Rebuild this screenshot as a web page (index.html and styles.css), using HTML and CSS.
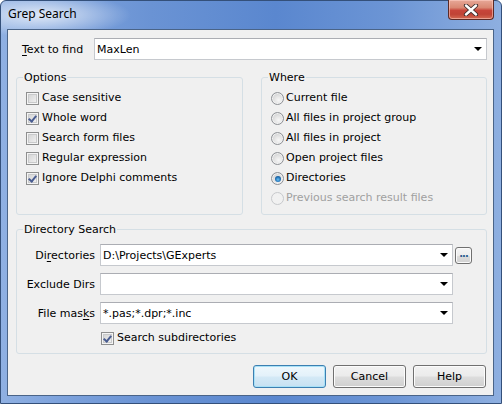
FILE: index.html
```html
<!DOCTYPE html>
<html>
<head>
<meta charset="utf-8">
<link rel="stylesheet" href="styles.css">
</head>
<body>
<div class="window">
  <div class="titlebar">
    <span class="title">Grep Search</span>
    <div class="close">
      <svg width="16" height="12" viewBox="0 0 16 12"><path d="M3 1.5 L13 10.5 M13 1.5 L3 10.5" stroke="#3a2a2a" stroke-width="4.2" stroke-linecap="round"/><path d="M3 1.5 L13 10.5 M13 1.5 L3 10.5" stroke="#ffffff" stroke-width="2.4" stroke-linecap="round"/></svg>
    </div>
  </div>
  <div class="client">
    <div class="find-row">
      <label class="find-label"><u>T</u>ext to find</label>
      <div class="combo find-combo"><span class="combo-text">MaxLen</span><span class="arrow"></span></div>
    </div>

    <div class="groups">
      <fieldset class="group options">
        <legend>Options</legend>
        <div class="opt"><span class="cb"></span><span class="lbl">Case sensitive</span></div>
        <div class="opt"><span class="cb checked"></span><span class="lbl">Whole word</span></div>
        <div class="opt"><span class="cb"></span><span class="lbl">Search form files</span></div>
        <div class="opt"><span class="cb"></span><span class="lbl">Regular expression</span></div>
        <div class="opt"><span class="cb checked"></span><span class="lbl">Ignore Delphi comments</span></div>
      </fieldset>
      <fieldset class="group where">
        <legend>Where</legend>
        <div class="opt"><span class="rb"></span><span class="lbl rl">Current file</span></div>
        <div class="opt"><span class="rb"></span><span class="lbl rl">All files in project group</span></div>
        <div class="opt"><span class="rb"></span><span class="lbl rl">All files in project</span></div>
        <div class="opt"><span class="rb"></span><span class="lbl rl">Open project files</span></div>
        <div class="opt"><span class="rb selected"></span><span class="lbl rl">Directories</span></div>
        <div class="opt disabled"><span class="rb"></span><span class="lbl rl">Previous search result files</span></div>
      </fieldset>
    </div>

    <fieldset class="group dirs">
      <legend>Directory Search</legend>
      <div class="dir-row">
        <label class="dir-label">Di<u>r</u>ectories</label>
        <div class="combo dir-combo"><span class="combo-text">D:\Projects\GExperts</span><span class="arrow"></span></div>
        <div class="browse">...</div>
      </div>
      <div class="dir-row">
        <label class="dir-label">Exclude Dirs</label>
        <div class="combo dir-combo"><span class="combo-text"></span><span class="arrow"></span></div>
      </div>
      <div class="dir-row">
        <label class="dir-label">File mas<u>k</u>s</label>
        <div class="combo dir-combo"><span class="combo-text">*.pas;*.dpr;*.inc</span><span class="arrow"></span></div>
      </div>
      <div class="opt subdirs"><span class="cb checked"></span><span class="lbl">Search subdirectories</span></div>
    </fieldset>

    <div class="buttons">
      <div class="btn default">OK</div>
      <div class="btn">Cancel</div>
      <div class="btn">Help</div>
    </div>
  </div>
</div>
</body>
</html>
```

FILE: styles.css
```css
* { box-sizing: border-box; }

body {
  margin: 0;
  background: #ffffff;
  font-family: "DejaVu Sans", sans-serif;
  font-size: 11px;
  color: #000;
}

.window {
  width: 502px;
  height: 404px;
  border: 1px solid #34507a;
  border-radius: 6px 6px 0 0;
  padding: 0 7px 7px 6px;
  display: flex;
  flex-direction: column;
  background:
    radial-gradient(ellipse 90px 22px at 40px 14px, rgba(255,255,255,0.75), rgba(255,255,255,0) 100%),
    linear-gradient(90deg, #8fb0e2 0%, #7da2dc 12%, #6a93d4 30%, #5a87cf 55%, #6c95d5 78%, #8eafe0 100%);
}

.titlebar {
  height: 28px;
  display: flex;
  align-items: flex-start;
  flex: none;
}

.title {
  font-family: "Noto Sans", "DejaVu Sans", sans-serif;
  font-size: 12px;
  line-height: 16px;
  margin-top: 5px;
  padding-left: 1px;
  color: #000;
}

.close {
  margin-left: auto;
  width: 46px;
  height: 20px;
  margin-top: -1px;
  border: 1px solid #5b2a26;
  border-top: none;
  border-radius: 0 0 4px 4px;
  background: linear-gradient(#e7a898 0%, #d98873 40%, #c7453a 55%, #c04336 75%, #d36b53 100%);
  box-shadow: inset 0 0 0 1px rgba(255,210,200,0.55);
  display: flex;
  align-items: center;
  justify-content: center;
}

.client {
  flex: 1;
  border: 1px solid #4a6488;
  background: #f0f0f0;
  padding: 8px 6px 0 8px;
}

.find-row {
  display: flex;
  align-items: center;
  height: 22px;
}

.find-label {
  width: 78px;
  padding-left: 6px;
  flex: none;
}

u { text-decoration: underline; text-underline-offset: 2px; }

.combo {
  height: 22px;
  background: #fff;
  border: 1px solid #c6c9ce;
  border-top-color: #abadb3;
  display: flex;
  align-items: center;
  padding-left: 2px;
}

.find-combo { width: 393px; }

.combo-text { flex: 1; white-space: nowrap; }

.arrow {
  width: 0;
  height: 0;
  border-left: 4px solid transparent;
  border-right: 4px solid transparent;
  border-top: 4px solid #000;
  margin-right: 4px;
}

.groups {
  display: flex;
  justify-content: space-between;
  margin-top: 11px;
  width: 471px;
}

.group {
  margin: 0;
  border: 1px solid #d5dfe5;
  border-radius: 3px;
  padding: 6px 0 0 9px;
  min-width: 0;
}

.group legend {
  padding: 0 1px;
  margin-left: -3px;
  line-height: 13px;
}

.options { width: 227px; height: 144px; }
.where { width: 226px; height: 144px; }

.opt {
  display: flex;
  align-items: flex-start;
  height: 20px;
}

.lbl {
  line-height: 13px;
  margin-top: 1px;
  margin-left: 3px;
  white-space: nowrap;
}
.rl { margin-left: 2px; }

.cb {
  flex: none;
  width: 13px;
  height: 13px;
  margin-top: 2px;
  border: 1px solid #8e8f8f;
  background: linear-gradient(135deg, #cfd0d1 0%, #e6e6e6 60%, #f6f6f6 100%);
  box-shadow: inset 0 0 0 1px #f4f4f4, inset 0 0 0 2px #c9cacb;
  position: relative;
}

.cb.checked::after {
  content: "";
  position: absolute;
  left: 3px;
  top: 1px;
  width: 3px;
  height: 6px;
  border-right: 2px solid #4a5d91;
  border-bottom: 2px solid #4a5d91;
  transform: rotate(40deg);
}

.rb {
  flex: none;
  width: 13px;
  height: 13px;
  margin-top: 2px;
  border-radius: 50%;
  border: 1px solid #8d9095;
  background: radial-gradient(circle at 60% 65%, #f7f7f7 0%, #e2e2e2 45%, #bfc1c3 100%);
  box-shadow: inset 0 0 0 1px #f2f2f2;
  position: relative;
}

.rb.selected::after {
  content: "";
  position: absolute;
  left: 2.5px;
  top: 2.5px;
  width: 6px;
  height: 6px;
  border-radius: 50%;
  background: radial-gradient(circle at 50% 60%, #6cc1f0 0%, #2a7cc0 45%, #0b3f73 100%);
}

.opt.disabled .rb {
  border-color: #c7c9cc;
  background: #f1f1f1;
  box-shadow: none;
}
.opt.disabled .lbl { color: #a0a0a0; }

.dirs {
  margin-top: 8px;
  width: 471px;
  height: 131px;
  padding-top: 8px;
}

.dir-row {
  display: flex;
  align-items: center;
  height: 22px;
  margin-bottom: 7px;
}

.dir-label {
  text-align: right;
  margin-right: 5px;
  flex: none;
  margin-left: -9px;
  width: 78px;
}

.dir-combo { width: 353px; }

.browse {
  width: 17px;
  height: 17px;
  margin-left: 2px;
  border: 1px solid #707070;
  border-radius: 3px;
  background: linear-gradient(#f6f6f6 0%, #ececec 50%, #dcdcdc 51%, #d2d2d2 100%);
  box-shadow: inset 0 0 0 1px #fbfbfb;
  font-size: 10px;
  font-weight: bold;
  line-height: 12px;
  color: #2c5d8f;
  text-align: center;
  letter-spacing: -1px;
}

.subdirs { margin-left: 75px; margin-top: -1px; }

.buttons {
  display: flex;
  justify-content: flex-end;
  gap: 7px;
  margin-top: 11px;
  width: 470px;
}

.btn {
  width: 73px;
  height: 23px;
  border: 1px solid #707070;
  border-radius: 3px;
  background: linear-gradient(#f2f2f2 0%, #ebebeb 48%, #dddddd 52%, #cfcfcf 100%);
  box-shadow: inset 0 0 0 1px #fcfcfc;
  text-align: center;
  line-height: 21px;
}

.btn.default {
  border-color: #3c7fb1;
  box-shadow: inset 0 0 0 1px #a8e1f7;
  background: linear-gradient(#eef7fc 0%, #e3f1fa 48%, #d4e9f6 52%, #c6e1f2 100%);
}
```
